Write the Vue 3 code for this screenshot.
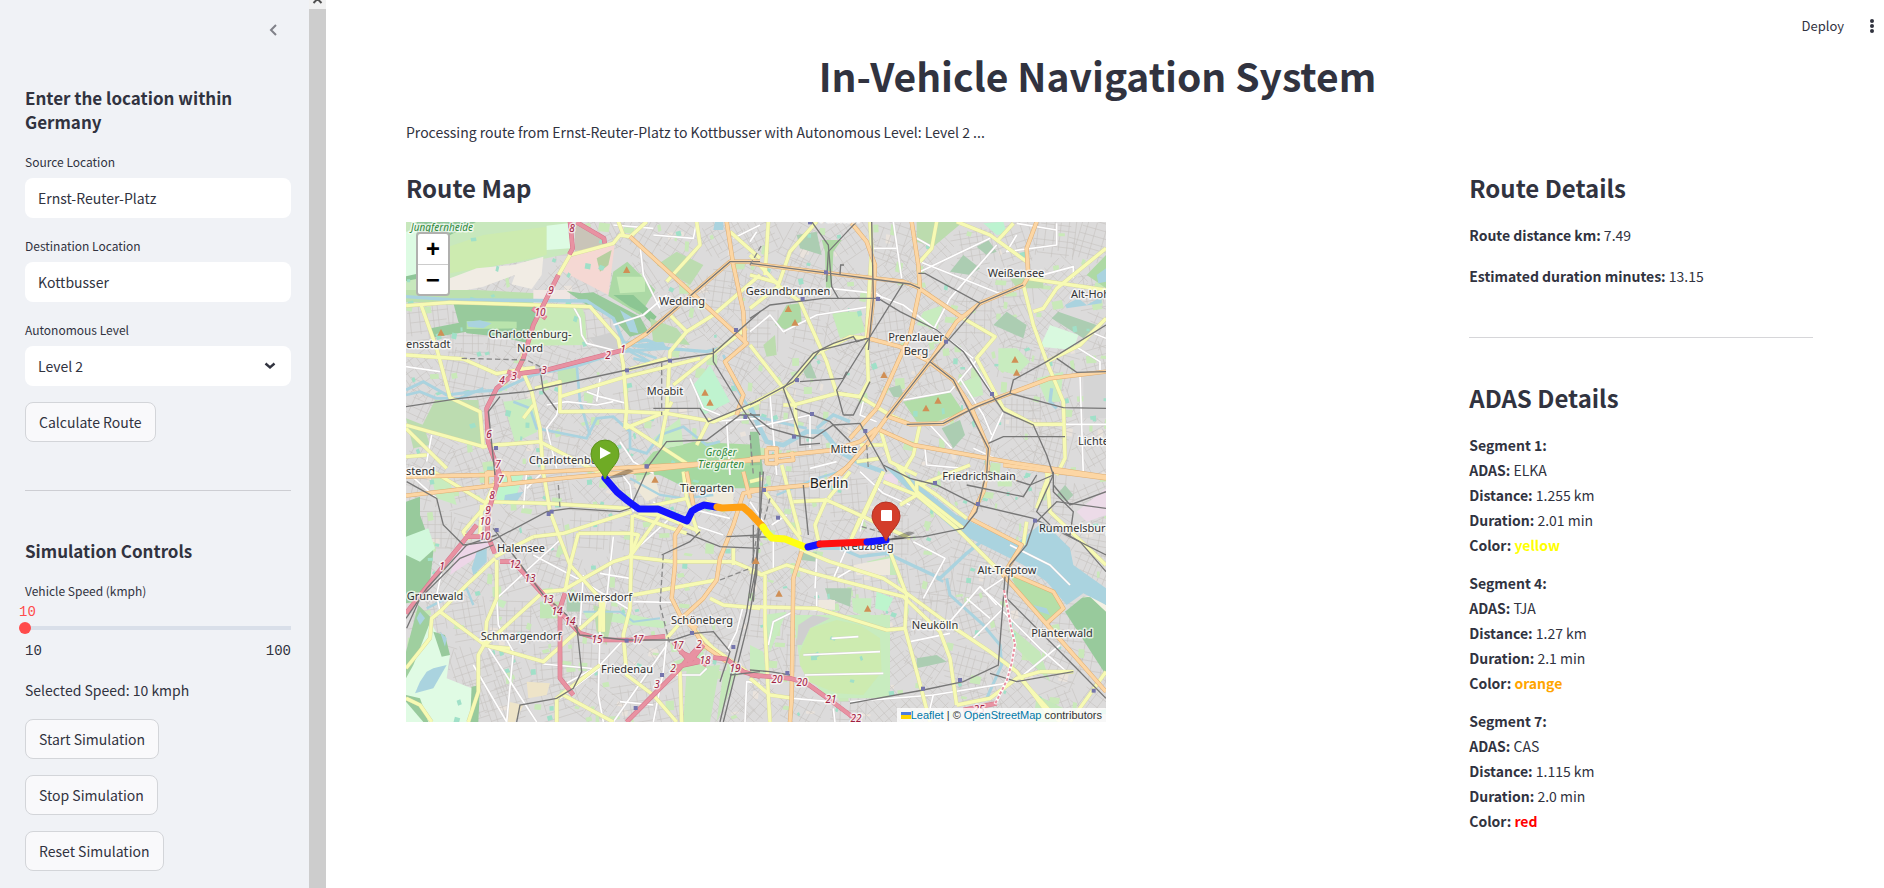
<script setup>
import { ref } from 'vue'

const source = ref('Ernst-Reuter-Platz')
const destination = ref('Kottbusser')
const level = ref('Level 2')
const speed = ref(10)

const segments = [
  { id: 1, adas: 'ELKA', distance: '1.255 km', duration: '2.01 min', color: 'yellow' },
  { id: 4, adas: 'TJA', distance: '1.27 km', duration: '2.1 min', color: 'orange' },
  { id: 7, adas: 'CAS', distance: '1.115 km', duration: '2.0 min', color: 'red' },
]

// Small deterministic generator, so that the side streets are the same on each load.
let seed = 20
function rand() {
  seed = (seed * 16807) % 2147483647
  return seed / 2147483647
}

function sideStreets() {
  let d = ''
  for (let cy = 20; cy < 500; cy += 42) {
    for (let cx = 20; cx < 700; cx += 42) {
      const base = rand() * 1.5
      const x0 = cx + rand() * 14 - 7
      const y0 = cy + rand() * 14 - 7
      for (let k = 0; k < 2; k++) {
        const a = base + (k * Math.PI) / 2
        const ux = Math.cos(a)
        const uy = Math.sin(a)
        for (let o = -20; o <= 20; o += 5 + rand() * 6) {
          const len = 12 + rand() * 12
          const mx = x0 - uy * o
          const my = y0 + ux * o
          d += `M${(mx - ux * len).toFixed(1)} ${(my - uy * len).toFixed(1)}L${(mx + ux * len).toFixed(1)} ${(my + uy * len).toFixed(1)}`
        }
      }
    }
  }
  return d
}

function patches(count, max) {
  let d = ''
  for (let i = 0; i < count; i++) {
    const x = rand() * 700
    const y = rand() * 500
    const w = 2 + rand() * max
    const h = 2 + rand() * max
    const s = rand() * 4 - 2
    d += `M${x.toFixed(1)} ${y.toFixed(1)}l${w.toFixed(1)} ${s.toFixed(1)}l${(-s).toFixed(1)} ${h.toFixed(1)}l${(-w).toFixed(1)} ${(-s).toFixed(1)}z`
  }
  return d
}

const streets = sideStreets()
const lawns = patches(330, 9)
const pitches = patches(170, 4)
const plots = patches(90, 7)

// The map is kept as four sheets; shapes use each sheet's own units, three to a pixel.
const sheets = [
  {
    at: 'translate(-6 -7) scale(0.33333)',
    areas: [
      ['#c8e8bd', '0,0 505,0 520,112 440,130 300,150 150,190 18,240'],
      ['#ddfbe3', '18,50 50,50 50,190 18,190'],
      ['#8fc698', '18,184 52,176 50,20 230,20 150,60 60,100 60,190 18,198'],
      ['#cdebb0', '145,95 250,60 440,35 440,120 330,145 150,175'],
      ['#ddfbe3', '440,32 510,24 510,100 440,105'],
      ['#f1ece4', '150,190 230,160 340,150 430,125 425,180 395,222 335,208 345,180 250,215 150,235'],
      ['#c9c4b8', '525,25 612,72 612,95 525,108'],
      ['#f5d8d3', '510,120 645,82 625,240 490,170'],
      ['#b7cfa0', '590,130 635,105 625,150 600,170'],
      ['#bce0ae', '18,225 230,225 410,235 400,265 18,262'],
      ['#98ca9c', '160,264 420,270 385,385 300,365 200,355 175,320'],
      ['#b9e4ac', '200,318 350,320 350,340 200,342'],
      ['#98ca9c', '92,340 185,322 200,350 95,368'],
      ['#c8eab8', '440,275 545,275 555,300 560,390 375,392 400,340'],
      ['#f0e6e2', '400,225 510,225 510,255 400,262'],
      ['#98ca9c', '500,228 545,235 580,232 720,305 745,350 690,365 640,310 560,270'],
      ['#acd9a5', '640,170 682,140 766,225 720,300 625,243'],
      ['#8cc693', '640,240 700,240 770,305 755,325 720,290 690,275'],
      ['#c5eab6', '650,185 735,185 735,230 660,235'],
      ['#bcdcb0', '105,555 235,555 245,690 60,645'],
      ['#c8ecbf', '310,560 400,550 412,650 345,682'],
      ['#c2e4b6', '472,460 530,460 530,500 475,505'],
      ['#bff3cf', '880,510 930,450 990,560 910,600'],
      ['#bcdcb0', '770,150 830,110 910,150 870,210'],
      ['#abdba2', '760,710 880,680 1080,690 1080,780 700,780'],
      ['#c8ecbf', '760,670 840,610 850,690 790,700'],
      ['#cfcfcf', '570,370 640,350 660,400 600,410'],
      ['#bcdcb0', '18,610 70,630 90,690 40,700'],
      ['#b9dcae', '750,310 830,340 870,390 760,380'],
    ],
    lakes: ['200,320 240,316 275,325 250,340 205,335', '945,20 970,20 970,45 940,45', '660,285 700,310 715,355 690,350', '670,390 790,380 800,400 720,400'],
    rivers: [
      ['10', '18,245 150,254 560,258 640,310 672,385 740,375 800,400 920,410 960,400'],
      ['9', '18,525 70,500 140,540 220,530 300,525 400,480 540,450 660,410 800,400'],
      ['8', '18,540 60,530 110,550 180,550 250,520'],
      ['8', '340,560 390,580 410,640 560,670 590,610 640,605 690,650 690,700 740,715 780,660 850,635 920,690 960,680'],
      ['8', '530,450 540,560 570,660'],
      ['8', '690,410 750,440 M700,430 740,440 M680,400 770,430'],
      ['8', '970,420 1010,520 1060,600'],
    ],
    white: [
      '18,455 120,470', '95,660 80,740', '440,570 500,560 590,570 640,560', '520,275 540,310 545,360 560,385 640,405',
      '560,530 600,545 680,565', '660,680 700,740 760,775', '600,490 590,560', '720,90 730,180 780,280', '890,20 880,70 760,60',
      '640,330 730,300 800,240', '920,620 1080,610', '480,550 470,600 440,640 470,760', '980,620 990,780', '870,490 910,580 960,600', '1000,70 1080,30', '760,40 640,30',
    ],
    yellow: [
      '18,272 150,262 570,275 655,372 670,450 680,580 675,640', '64,272 110,400 150,548 240,590 250,700', '18,420 190,432 290,476 370,462 405,458',
      '375,400 360,450 395,530 420,640 430,780', '405,520 480,500 480,590 640,588 800,595 940,620 1080,560', '290,690 420,680 600,775', '18,630 250,695 300,688',
      '18,640 140,760', '480,545 660,490 700,480 900,430', '665,470 800,430', '510,120 640,85 660,60 690,65 740,20', '510,120 470,190', '675,640 800,590 815,560',
      '890,20 900,90 800,200', '860,350 940,300 1080,180', '810,300 860,350 810,410 800,590 780,690', '820,510 920,430 1040,340', '990,50 1080,130', '675,625 860,745',
      '18,725 80,720', '655,20 670,60', '890,690 930,610', '370,610 400,570',
    ],
    orange: ['690,65 860,220 1040,385 975,440 1030,540 1010,600', '980,20 1000,150 1030,290 1035,385', '670,400 740,355 990,140 1080,140', '18,785 260,780 860,748 1080,735'],
    motorway: ['510,20 518,100 508,118', '530,22 612,70 614,85', '475,180 440,250 400,330 370,430 345,480', '670,405 440,465 340,478 290,520 260,580 264,680 300,780', '398,280 438,310', '322,470 362,485'],
    rail: ['18,575 180,550 380,530 680,465 810,435 940,415 1080,290', '740,355 990,140 1080,140', '940,400 940,440 1020,570 1080,660', '300,545 265,590 285,780', '740,760 800,680 920,675 1020,600 1080,600', '760,580 900,580 925,620 1080,555', '420,460 430,530 470,585'],
    dashed: ['185,430 380,435 420,455', '785,440 785,600'],
    peaks: ['680,165', '123,353', '915,533', '930,563'],
    stations: ['1008,345', '810,437', '681,466', '288,699', '1036,606', '740,754'],
  },
  {
    at: 'translate(344 -7) scale(0.33333)',
    areas: [
      ['#bcdcae', '500,20 640,20 550,95 500,80'],
      ['#accdb2', '140,60 200,50 215,120 150,100'],
      ['#aed9a4', '215,75 275,75 250,110 245,220 228,220 225,110'],
      ['#accdb2', '600,170 640,120 690,160 660,180'],
      ['#accdb2', '680,95 715,75 740,110 710,120'],
      ['#bcf3d0', '700,25 760,20 770,55 740,60'],
      ['#aed9a4', '75,330 110,270 150,265 155,320 110,345'],
      ['#c5ebb8', '245,290 330,290 345,350 270,370'],
      ['#accdb2', '730,330 770,290 830,330 820,370'],
      ['#accdb2', '905,310 925,290 1040,330 1000,370'],
      ['#d9f9df', '870,395 900,330 985,360 970,405'],
      ['#aed9a4', '1010,180 1068,120 1068,220 1040,200'],
      ['#c8ecbf', '745,400 800,400 840,440 800,480 745,465'],
      ['#b2dda8', '460,560 600,530 640,590 560,620 500,620'],
      ['#accdb2', '575,640 630,615 645,660 610,700'],
      ['#c8ecbf', '520,290 580,270 560,340 500,330'],
      ['#accdb2', '415,520 450,510 465,550 430,545'],
      ['#bcdcae', '780,190 800,190 880,180 880,220 800,220'],
      ['#d5d5d5', '1000,480 1068,470 1068,610 1000,610'],
      ['#accdb2', '160,470 180,440 200,490 170,490'],
      ['#98ca9c', '0,650 25,650 40,780 0,780'],
      ['#bcdcae', '40,390 75,360 80,420 50,425'],
      ['#c8ecbf', '640,500 690,480 700,540 660,550'],
      ['#c8ecbf', '860,490 940,470 930,560 890,560'],
    ],
    lakes: ['945,270 985,250 1010,270 1055,245 1055,265 950,280', '1040,180 1068,160 1068,200 1045,205'],
    rivers: [['14', '0,570 20,620 50,680 100,690 170,650 220,650 270,710 330,745 400,770'], ['10', '200,640 250,600 300,620'], ['8', '0,600 80,620 170,640'], ['10', '905,520 900,560 920,580']],
    white: [
      '430,20 455,190', '370,100 440,100', '0,350 60,300 100,350 200,300 360,275', '0,80 20,50', '550,345 600,250 740,90', '510,140 760,240', '500,70 545,95', '510,170 720,70', '380,240 460,270 560,345 670,430',
      '240,220 380,235 400,250', '460,555 600,530 680,435', '630,490 700,600 725,660', '660,430 760,590', '540,630 605,700', '990,480 1000,780', '720,680 760,590', '800,60 770,110 920,90 920,25', '800,25 920,45',
      '60,540 80,780', '0,640 180,600', '340,560 330,600 380,620', '525,700 530,750 640,760', '940,628 1068,628', '1020,350 1068,370', '840,190 970,155 970,190', '970,390 1050,440 1050,465', '180,600 180,700', '670,700 780,750', '180,760 260,740',
    ],
    yellow: [
      '55,20 45,180', '0,120 85,210', '85,210 120,110 200,20', '0,280 90,210', '0,180 90,205', '90,215 150,260 230,440 260,535', '0,390 100,520 135,570', '0,570 130,500 190,420 300,365 355,370',
      '360,20 365,100 350,360 355,500 330,545 260,535 130,570 100,570', '510,140 545,100 560,20', '620,20 720,60 830,140', '740,80 790,25', '640,310 735,365 680,430 760,580 850,628 940,628',
      '830,190 1068,225', '850,290 880,280 920,220 1068,100', '820,210 850,330 890,440 940,560 945,730 920,780', '890,440 990,390 1068,310', '260,535 330,545 420,600 480,628', '510,628 490,720 460,770', '390,640 420,740 500,780', '320,740 390,730', '135,570 140,660', '330,690 400,690',
    ],
    orange: [
      '0,145 240,175 460,200 500,215 640,310', '305,25 350,80 375,150 370,250 355,370', '485,20 505,150 510,220 480,360 390,560 380,580', '860,20 830,100 835,185 820,210 690,265 620,320 540,440 415,600 350,690 270,780',
      '355,370 450,395 530,435 610,495 665,580 715,700 710,780', '300,670 380,580', '415,605 480,628 580,625 660,580 900,490 1068,470', '390,645 490,690 800,745 1068,785', '0,730 60,725 250,705 330,680 380,640', '50,700 80,700 80,745 50,745 50,700', '80,740 130,735 125,710',
    ],
    motorway: [],
    rail: [
      '0,310 60,270 220,250 385,250 450,290 560,345 640,410 680,470 760,590 850,630 890,720 910,780', '185,20 235,90 245,215 265,250', '320,20 235,110 230,200', '270,178 272,150 282,150', '0,145 240,175 480,207 510,220', '365,20 370,250 355,405',
      '505,175 525,175 690,265 820,210', '460,205 260,525 280,600', '355,370 210,405 130,500 0,570', '410,608 540,440 690,265', '540,440 610,495 715,700 710,780', '0,595 60,640 130,660 190,670 250,630 330,625 410,770', '470,628 580,625 680,575 780,535', '780,535 790,495 890,440 1068,330', '780,535 940,578 1068,580', '715,685 760,665 945,665', '290,470 280,490 150,500', '350,370 320,380 310,365 250,385 190,415 100,520 150,660 150,690 210,685', '920,430 980,472 1068,470', '280,600 310,600 360,500', '135,580 240,620 300,680',
    ],
    dashed: ['0,150 35,90', '0,660 10,780', '350,690 355,760'],
    peaks: ['115,282', '135,323', '402,480', '795,434', '800,473', '564,557', '528,580'],
    stations: ['180,22', '228,172', '384,252', '158,252', '141,495', '588,380', '186,597', '132,665', '346,648', '726,537'],
  },
  {
    at: 'translate(-6 243) scale(0.33333)',
    areas: [
      ['#98ca9c', '18,110 60,95 60,150 100,260 90,350 40,410 18,415'],
      ['#d2f8dc', '18,215 85,190 105,250 60,290 18,270'],
      ['#bdf5cd', '290,30 370,30 340,120 290,110'],
      ['#e0fbe4', '18,620 90,470 150,570 140,640 215,670 215,771 18,771'],
      ['#9fcf9f', '55,420 95,460 60,550 40,600 18,640 18,560'],
      ['#98ca9c', '100,500 135,510 150,570 125,575'],
      ['#98ca9c', '18,690 60,700 85,771 70,771 18,710'],
      ['#98ca9c', '215,665 240,660 235,771 210,771'],
      ['#c8ecbf', '90,20 150,50 170,120 110,100'],
      ['#edd6e8', '190,240 290,220 240,270 150,330 170,260'],
      ['#a5d8a0', '680,20 1080,0 1080,70 860,70 780,30'],
      ['#eee8d8', '700,60 760,20 780,90 740,110'],
      ['#c2e6b6', '420,410 480,410 480,460 420,460'],
      ['#accdb2', '500,390 545,390 545,440 500,440'],
      ['#c9edc0', '550,440 700,450 800,470 790,490 700,480 560,460'],
      ['#eee4c8', '380,650 450,655 440,690 385,700'],
      ['#eee4c8', '325,710 370,720 345,771 320,771'],
      ['#c5e8ba', '860,610 960,600 930,771 850,771'],
      ['#c5e8ba', '970,620 1010,600 990,680 950,771'],
      ['#eee8d8', '920,80 1000,80 1000,120 920,120'],
      ['#c5e8ba', '820,590 910,560 920,610 840,620'],
      ['#bcdcae', '580,420 640,440 620,540 590,500'],
      ['#c8ecbf', '290,400 320,410 310,430 290,420'],
    ],
    lakes: ['60,650 80,620 100,610 140,600 100,670 45,685', '315,90 370,80 350,110 310,120', '230,260 260,250 260,290 220,330 215,310', '120,500 140,520 135,545', '60,440 75,460 60,480 50,460'],
    rivers: [['6', '550,440 660,440 700,470 780,460'], ['7', '80,430 200,370 220,420'], ['7', '690,40 780,90 850,100 940,90']],
    white: [
      '380,20 370,130', '20,20 110,100', '400,270 550,350 690,435', '480,225 290,400', '540,480 550,330', '600,325 690,340', '640,215 620,400 600,500 595,690 610,771', '120,440 110,390 125,320', '290,400 295,480 340,560 320,771', '260,540 410,771',
      '430,597 595,612 480,700', '700,410 815,412', '760,110 810,160 700,260', '865,130 990,160', '665,530 600,600', '800,540 640,771', '800,520 790,620 760,771', '815,630 900,630 920,610', '880,180 970,210', '660,20 690,60 700,140', '1080,655 1040,650 1035,771', '660,710 760,720', '220,600 320,771', '380,70 430,20', '1030,420 1010,500 980,560', '490,660 600,600',
    ],
    yellow: [
      '100,20 250,110 440,115 690,130', '430,20 450,140 510,300 600,400 610,500', '400,215 490,205 695,140', '285,275 400,215', '290,285 290,400 260,470 255,535 235,570 235,680 205,771', '285,280 210,350 120,440 255,540 430,590 530,500 610,430', '18,610 90,520 95,460 120,440', '255,540 430,380 490,375 640,290 690,275 820,290 1000,290 1080,325',
      '535,205 510,300 495,380', '535,205 690,205 715,210 690,275', '697,150 690,430 670,510 680,630 760,690 830,771', '270,545 330,550', '700,390 950,345', '700,150 860,205', '715,145 780,150 900,200', '850,20 860,100 720,130', '860,100 895,210', '610,500 610,410', '930,400 970,420 1080,430', '940,120 920,110 890,130',
      '880,490 940,550 1040,620', '835,480 800,520', '470,771 470,700 600,600', '490,690 640,771', '840,620 845,771', '300,20 250,130 190,200 200,220 240,210', '1000,250 1000,300', '18,700 60,720 95,771', '690,275 780,150', '600,430 600,500', '245,120 240,210',
    ],
    orange: ['18,92 250,65 480,40 700,20 1080,-20', '260,22 325,25 330,55', '260,20 260,60', '1080,75 1030,85 1000,180 960,280 950,345 910,400 850,455 890,490', '845,180 825,210 825,300 815,400 840,450 880,490 910,540 980,590', '860,20 880,120', '1030,20 1050,100'],
    motorway: ['18,445 100,340 230,180', '290,20 290,60 265,140 262,210 285,265', '300,290 340,290 440,400 470,430 540,505 610,525 690,525 795,514', '495,385 480,430 480,640 520,690', '820,530 870,590 910,540', '840,560 920,600', '900,540 830,620 760,690 680,771', '830,605 900,590', '940,578 980,582 1030,620 1080,635', '195,215 250,215'],
    rail: ['20,50 110,100 130,180 190,240 270,230 440,140 510,130 660,140 690,130 740,20', '18,460 80,370 200,240 290,210', '20,490 60,400 180,280 280,240', '280,190 340,270 430,390 500,450 540,510 680,525 820,525 880,505 940,500 990,560 960,650', '1060,180 1060,300 1040,440 1000,600 960,771', '1075,190 1070,330 1045,470 970,771', '860,205 960,245 1080,250', '980,215 1080,210', '990,630 1080,620', '350,771 360,720 470,700 520,670 545,620 530,480', '785,270 870,230 900,200'],
    dashed: ['790,270 780,420 810,540', '960,345 1050,310', '475,60 480,130'],
    peaks: ['765,44', '1068,287'],
    stations: ['455,140', '446,147', '290,195', '680,527', '876,504', '1000,546', '786,630', '707,729', '740,4'],
  },
  {
    at: 'translate(344 243) scale(0.33333)',
    areas: [
      ['#accdb2', '225,370 305,370 300,425 235,400'],
      ['#bdf5cd', '380,380 430,400 410,440 375,430'],
      ['#c8ecbf', '305,400 365,400 360,460 310,440'],
      ['#eee8de', '205,405 255,405 255,435 205,430'],
      ['#c8ecbf', '130,450 420,450 420,700 230,700 150,600'],
      ['#cdebb0', '150,560 180,490 260,465 330,480 390,520 395,620 340,690 260,685 175,650 150,600'],
      ['#cfcfcf', '140,540 145,480 190,450 240,460 180,490 155,540'],
      ['#accdb2', '500,580 560,570 590,590 500,610'],
      ['#98ca9c', '945,440 1000,395 1068,400 1068,630'],
      ['#f4f1e4', '980,400 1040,390 1068,420 1068,440 1020,395'],
      ['#b5dfa8', '780,330 840,345 920,390 940,430 880,475 800,370'],
      ['#ecdbe8', '980,140 1068,70 1068,150 1010,170'],
      ['#ecdbe8', '400,30 450,20 440,70 410,60'],
      ['#c5e8ba', '775,480 870,560 900,650 850,600 790,540'],
      ['#c5e8ba', '860,690 940,730 930,771 850,771'],
      ['#accdb2', '150,265 200,262 200,290 155,285'],
      ['#c8ecbf', '40,450 110,440 60,560'],
      ['#c8ecbf', '0,540 40,560 50,640 0,640'],
      ['#c5e8ba', '350,290 430,270 440,330 390,330'],
      ['#eee8de', '310,300 420,280 420,330 320,330'],
      ['#accdb2', '920,90 945,60 970,90 950,110'],
    ],
    lakes: ['400,0 470,30 620,150 800,235 880,170 960,250 970,300 1068,370 1068,420 1000,385 950,420 890,350 820,300 700,240 620,200 480,80', '850,420 890,430 900,450 870,440'],
    rivers: [['10', '210,250 270,250 330,275 410,265 570,340 650,265 700,225'], ['9', '590,340 600,390 700,480 750,540 755,600 710,700'], ['7', '270,20 200,40 80,90'], ['7', '560,340 580,350']],
    white: [
      '330,20 400,85 480,120', '490,230 585,280 520,400', '130,440 70,470 55,540', '200,380 200,435', '600,470 690,365 760,430 670,520', '650,400 720,460', '700,380 760,340', '760,440 870,550 950,620', '820,630 930,540', '480,530 600,505', '300,710 550,690 800,650', '780,240 900,300 960,360', '310,310 260,340', '160,570 390,560', '165,630 400,625', '250,730 255,771',
      '65,180 110,150', '70,220 70,310', '0,110 40,170', '150,430 240,440', '550,690 540,730', '200,280 195,370', '290,250 250,340', '690,365 740,420', '340,160 330,200', '60,690 130,700 240,710', '245,520 325,515',
    ],
    yellow: [
      '45,80 150,220 155,260', '95,0 150,210', '130,110 230,105 340,155 480,220', '235,100 300,20', '230,100 195,180 210,250', '155,255 240,290 400,340 470,385 600,480 720,560 800,620 890,740', '30,330 110,300 190,325 460,395 570,500 600,580 620,720', '0,425 200,430 410,495 465,490', '45,330 45,480 55,690', '420,260 470,390 465,490 500,620 540,771',
      '330,160 300,230 400,20', '400,50 500,90 620,190 760,330', '500,90 500,50 560,90 650,160', '830,170 820,240', '0,640 60,690 130,700', '620,720 720,700 800,640 870,620', '815,645 930,771', '870,620 970,620', '900,20 860,130', '660,0 510,60', '0,50 40,40', '890,20 900,140 1068,300', '640,190 500,80 440,0', '960,771 1068,620', '0,320 40,330', '340,155 400,20', '450,120 500,90', '55,690 60,771',
    ],
    orange: ['0,75 50,72 175,60 230,50 300,0', '155,260 130,340 125,700 120,771', '715,0 700,80 660,160 815,240 760,330 1068,680', '760,0 1068,40', '770,320 910,380 940,430 890,475'],
    motorway: ['0,630 120,640 170,655 240,705 300,750 330,771', '640,735 740,715'],
    rail: ['30,20 30,130 10,410', '40,20 20,300 0,400', '400,0 480,40 560,60 680,120 850,160 1068,270', '410,223 520,215 640,190 680,140 710,20', '855,165 830,240 780,300 770,400 960,590 1068,700', '765,335 745,600 640,650 520,675 300,715', '0,615 60,620 120,630', '910,30 860,140 900,180 990,230 1068,320', '910,20 910,80 970,140 960,210 900,190', '910,60 960,120 1068,80', '715,20 840,60 910,30', '160,60 175,210', '720,625 800,650 970,620', '650,60 820,95 860,30', '860,170 920,110 1068,130', '0,216 60,216'],
    dashed: ['35,130 5,300', '60,100 20,250', '335,185 440,215'],
    peaks: ['87,386', '353,431', '17,288'],
    stations: ['42,75', '84,158', '555,54', '684,117', '855,167', '519,671', '630,645', '1031,677', '112,624'],
  },
]

const lineKinds = ['white', 'yellow', 'orange', 'motorway']

function toPath(line) {
  return 'M' + line.replace(/ M/g, 'M')
}

const places = [
  { t: 'Pankow', x: 434, y: 0 },
  { t: 'Wedding', x: 276, y: 83 },
  { t: 'Charlottenburg-', x: 124, y: 116 },
  { t: 'Nord', x: 124, y: 130 },
  { t: 'ensstadt', x: 0, y: 126, start: true },
  { t: 'Moabit', x: 259, y: 173 },
  { t: 'Charlottenburg', x: 123, y: 242, start: true },
  { t: 'stend', x: 0, y: 253, start: true },
  { t: 'Weißensee', x: 610, y: 55 },
  { t: 'Gesundbrunnen', x: 382, y: 73 },
  { t: 'Alt-Hohen', x: 665, y: 76, start: true },
  { t: 'Prenzlauer', x: 510, y: 119 },
  { t: 'Berg', x: 510, y: 133 },
  { t: 'Mitte', x: 438, y: 231 },
  { t: 'Lichtenberg', x: 672, y: 223, start: true },
  { t: 'Friedrichshain', x: 573, y: 258 },
  { t: 'Kreuzberg', x: 461, y: 328 },
  { t: 'Rummelsburg', x: 633, y: 310, start: true },
  { t: 'Alt-Treptow', x: 601, y: 352 },
  { t: 'Neukölln', x: 529, y: 407 },
  { t: 'Plänterwald', x: 656, y: 415 },
  { t: 'Tiergarten', x: 301, y: 270 },
  { t: 'Halensee', x: 115, y: 330 },
  { t: 'Grunewald', x: 29, y: 378 },
  { t: 'Wilmersdorf', x: 194, y: 379 },
  { t: 'Schmargendorf', x: 115, y: 418 },
  { t: 'Schöneberg', x: 296, y: 402 },
  { t: 'Friedenau', x: 221, y: 451 },
]

const exits = [
  ['8', 166, 10], ['9', 145, 72], ['10', 134, 94], ['2', 202, 137], ['1', 217, 131], ['3', 138, 152], ['3', 108, 158], ['4', 96, 162], ['6', 83, 216], ['7', 92, 246],
  ['7', 95, 261], ['8', 86, 277], ['9', 82, 292], ['10', 79, 303], ['10', 79, 318], ['1', 36, 348], ['12', 109, 346], ['13', 124, 360], ['13', 142, 381], ['14', 151, 393],
  ['14', 164, 403], ['15', 191, 421], ['17', 232, 421], ['17', 272, 427], ['2', 293, 426], ['2', 267, 450], ['18', 299, 442], ['19', 329, 450], ['3', 251, 466],
  ['20', 371, 461], ['20', 396, 464], ['21', 425, 481], ['22', 450, 500], ['25', 573, 491],
]

const route = [
  ['#1414ff', '199,256 211,270 222,279 233,287 252,287 281,299 286,289 291,286 298,283 310,285'],
  ['#ffa012', '311,285 316,286 337,285 344,291 357,305'],
  ['#ffff12', '357,305 361,311 366,316 379,317 399,325'],
  ['#1414ff', '402,325 414,322'],
  ['#ff1212', '414,322 460,320'],
  ['#1414ff', '461,320 480,318'],
]
</script>

<template>
  <div class="app">
    <aside class="sidebar">
      <div class="sidebar-body">
        <div class="sidebar-top">
          <button class="icon-button" type="button" aria-label="Collapse sidebar">
            <svg width="20" height="20" viewBox="0 0 20 20"><path d="M13 5 8 10l5 5" fill="none" stroke="#808189" stroke-width="2" /></svg>
          </button>
        </div>
        <h3>Enter the location within Germany</h3>
        <div class="field">
          <label for="source">Source Location</label>
          <input id="source" v-model="source" type="text" />
        </div>
        <div class="field">
          <label for="destination">Destination Location</label>
          <input id="destination" v-model="destination" type="text" />
        </div>
        <div class="field">
          <label for="level">Autonomous Level</label>
          <div class="select">
            <select id="level" v-model="level">
              <option>Level 0</option>
              <option>Level 1</option>
              <option>Level 2</option>
              <option>Level 3</option>
            </select>
            <svg class="chevron" width="12" height="8" viewBox="0 0 12 8"><path d="M1.500 1.500 6 5.500l4.500-4" fill="none" stroke="#31333f" stroke-width="2.400" /></svg>
          </div>
        </div>
        <button class="button" type="button">Calculate Route</button>
        <hr />
        <h3>Simulation Controls</h3>
        <div class="slider">
          <label for="speed">Vehicle Speed (kmph)</label>
          <output for="speed" :style="{ marginLeft: `calc(${(speed - 10) / 0.9}% - 6px)` }">{{ speed }}</output>
          <input id="speed" v-model="speed" type="range" min="10" max="100" />
          <div class="ticks"><span>10</span><span>100</span></div>
        </div>
        <p class="selected">Selected Speed: {{ speed }} kmph</p>
        <div class="actions">
          <button class="button" type="button">Start Simulation</button>
          <button class="button" type="button">Stop Simulation</button>
          <button class="button" type="button">Reset Simulation</button>
        </div>
      </div>
      <div class="scrollbar">
        <div class="scroll-arrow">
          <svg width="17" height="9" viewBox="0 0 17 9"><path d="M4.500 3 8.500-1l4 4" fill="none" stroke="#505050" stroke-width="2" /></svg>
        </div>
      </div>
    </aside>

    <main>
      <header>
        <button class="deploy" type="button">Deploy</button>
        <button class="icon-button" type="button" aria-label="Main menu">
          <svg width="20" height="20" viewBox="0 0 20 20" fill="#31333f"><circle cx="10" cy="5" r="2" /><circle cx="10" cy="10" r="2" /><circle cx="10" cy="15" r="2" /></svg>
        </button>
      </header>

      <div class="content">
        <h1>In-Vehicle Navigation System</h1>
        <p class="status">Processing route from {{ source }} to {{ destination }} with Autonomous Level: {{ level }} ...</p>

        <div class="columns">
          <section>
            <h2>Route Map</h2>
            <div class="map">
              <svg class="canvas" viewBox="0 0 700 500" role="img" aria-label="Route across Berlin">
                <rect width="700" height="500" fill="#dcdbdb" />
                <path class="plots" :d="plots" />
                <path class="streets" :d="streets" />
                <path class="lawns" :d="lawns" />
                <g v-for="s in sheets" :key="s.at" :transform="s.at">
                  <polygon v-for="a in s.areas" :key="a[1]" :points="a[1]" :fill="a[0]" />
                </g>
                <path class="pitches" :d="pitches" />
                <g v-for="s in sheets" :key="s.at" :transform="s.at" class="water">
                  <polygon v-for="l in s.lakes" :key="l" :points="l" />
                  <path v-for="r in s.rivers" :key="r[1]" :d="toPath(r[1])" :stroke-width="r[0]" />
                </g>
                <template v-for="kind in lineKinds" :key="kind">
                  <g v-for="s in sheets" :key="s.at" :transform="s.at" :class="['road', kind, 'casing']">
                    <path v-for="l in s[kind]" :key="l" :d="toPath(l)" />
                  </g>
                  <g v-for="s in sheets" :key="s.at + 'f'" :transform="s.at" :class="['road', kind]">
                    <path v-for="l in s[kind]" :key="l" :d="toPath(l)" />
                  </g>
                </template>
                <g v-for="s in sheets" :key="s.at" :transform="s.at">
                  <path v-for="l in s.rail" :key="l" class="rail" :d="toPath(l)" />
                  <path v-for="l in s.dashed" :key="l" class="dashed" :d="toPath(l)" />
                  <g v-for="p in s.peaks" :key="p" :transform="`translate(${p})`"><path d="M0-11 11 9h-22z" fill="#d08f55" /></g>
                  <g v-for="p in s.stations" :key="p" :transform="`translate(${p})`"><path d="M-6-6H6V6H-6z" fill="#7575ad" /></g>
                </g>
                <path d="M598 368l4 20 3 18 4 16-3 18-5 18-12 24" fill="none" stroke="#fff" stroke-width="3" />
                <path d="M598 368l4 20 3 18 4 16-3 18-5 18-12 24" fill="none" stroke="#e892a2" stroke-width="2" stroke-dasharray="3 2" />
                <g class="exits"><text v-for="(e, i) in exits" :key="i" :x="e[1]" :y="e[2]">{{ e[0] }}</text></g>
                <g class="places"><text v-for="p in places" :key="p.t" :x="p.x" :y="p.y" :class="{ start: p.start }">{{ p.t }}</text></g>
                <text class="city" x="423" y="266">Berlin</text>
                <g class="woods">
                  <text x="315" y="234">Großer</text>
                  <text x="315" y="246">Tiergarten</text>
                  <text x="36" y="9">Jungfernheide</text>
                </g>
                <g class="route"><polyline v-for="r in route" :key="r[1]" :points="r[1]" :stroke="r[0]" /></g>
                <g transform="translate(199 257)">
                  <path d="M0 0 18-8q6-3 11 0l-12 6z" fill="#000" opacity="0.300" />
                  <path d="M0 0C-5-11-14-16-14-25a14 14 0 0 1 28 0C14-16 5-11 0 0z" fill="#6fab25" stroke="#5d921c" />
                  <path d="M-5-32 6-26-5-20z" fill="#fff" />
                </g>
                <g transform="translate(480 319)">
                  <path d="M0 0 18-8q6-3 11 0l-12 6z" fill="#000" opacity="0.300" />
                  <path d="M0 0C-5-11-14-16-14-25a14 14 0 0 1 28 0C14-16 5-11 0 0z" fill="#d33d2a" stroke="#b53222" />
                  <rect x="-5" y="-31" width="11" height="11" rx="1" fill="#fff" />
                </g>
              </svg>
              <div class="zoom">
                <button type="button" aria-label="Zoom in">+</button>
                <button type="button" aria-label="Zoom out">−</button>
              </div>
              <div class="credit">
                <svg width="10" height="7" viewBox="0 0 10 7"><path fill="#4c7be1" d="M0 0h10v4H0z" /><path fill="#ffd500" d="M0 3h10v4H0z" /></svg>
                <a href="#leaflet">Leaflet</a> | © <a href="#osm">OpenStreetMap</a> contributors
              </div>
            </div>
          </section>

          <section>
            <h2>Route Details</h2>
            <div class="summary">
              <p><strong>Route distance km:</strong> 7.49</p>
              <p><strong>Estimated duration minutes:</strong> 13.15</p>
            </div>
            <hr class="split" />
            <h2>ADAS Details</h2>
            <div class="segments">
              <div v-for="s in segments" :key="s.id">
                <p><strong>Segment {{ s.id }}:</strong></p>
                <p><strong>ADAS:</strong> {{ s.adas }}</p>
                <p><strong>Distance:</strong> {{ s.distance }}</p>
                <p><strong>Duration:</strong> {{ s.duration }}</p>
                <p><strong>Color:</strong> <b :class="s.color">{{ s.color }}</b></p>
              </div>
            </div>
          </section>
        </div>
      </div>
    </main>
  </div>
</template>

<style>
body {
  background: #fff;
}
</style>

<style scoped>
.app {
  display: flex;
  height: 100vh;
  overflow: hidden;
  color: #31333f;
  font: 14px/26px "Noto Sans CJK SC", "Noto Sans", sans-serif;
}
.app * {
  box-sizing: border-box;
}
h1,
h2,
h3,
p {
  margin: 0;
}
button,
input,
select {
  font: inherit;
  color: inherit;
}
button {
  cursor: pointer;
}
strong,
h2,
h3 {
  font-weight: 600;
}
hr {
  border: 0;
  border-top: 1px solid #cdced3;
  margin: 48px 0;
}
.sidebar {
  display: flex;
  flex: none;
  width: 326px;
  background: #f0f2f6;
}
.sidebar-body {
  flex: 1;
  padding: 0 18px 0 25px;
}
.sidebar-top {
  display: flex;
  justify-content: flex-end;
  height: 86px;
  padding-top: 20px;
  padding-right: 8px;
}
.icon-button {
  display: block;
  width: 20px;
  height: 20px;
  padding: 0;
  border: 0;
  background: none;
}
h3 {
  font-size: 17px;
  line-height: 24px;
}
.field {
  margin-top: 17px;
}
.field label,
.slider label {
  display: block;
  font-size: 12px;
  line-height: 22px;
}
.field label {
  height: 27px;
}
.field input,
select {
  display: block;
  width: 100%;
  height: 40px;
  padding: 0 13px;
  border: 0;
  border-radius: 8px;
  background: #fff;
  line-height: 26px;
  appearance: none;
}
.select {
  position: relative;
}
.chevron {
  position: absolute;
  right: 15px;
  top: 16px;
  pointer-events: none;
}
.button {
  display: block;
  height: 40px;
  padding: 0 13px;
  border: 1px solid #d3d5d9;
  border-radius: 8px;
  background: #f9f9fb;
}
.field + .button {
  margin-top: 16px;
}
.slider {
  margin-top: 17px;
}
.slider output {
  display: block;
  color: #ff4b4b;
  font: 14px/20px "Liberation Mono", monospace;
}
.slider input {
  display: block;
  width: calc(100% + 12px);
  height: 12px;
  margin: 0 -6px;
  background: linear-gradient(#d9dfe9, #d9dfe9) center / calc(100% - 12px) 4px no-repeat;
  appearance: none;
}
.slider input::-webkit-slider-thumb {
  width: 12px;
  height: 12px;
  border-radius: 50%;
  background: #ff4b4b;
  appearance: none;
}
.ticks {
  display: flex;
  justify-content: space-between;
  margin-top: 7px;
  font: 14px/20px "Liberation Mono", monospace;
}
.selected {
  margin-top: 16px;
}
.actions {
  display: grid;
  justify-items: start;
  gap: 16px;
  margin-top: 16px;
}
.scrollbar {
  width: 17px;
  background: #cdcdcd;
}
.scroll-arrow {
  height: 9px;
  background: #f1f1f1;
}
.scroll-arrow svg {
  display: block;
}
main {
  flex: 1;
  min-width: 0;
}
header {
  display: flex;
  align-items: center;
  justify-content: flex-end;
  gap: 18px;
  height: 52px;
  padding-right: 2px;
}
.deploy {
  padding: 0;
  border: 0;
  background: none;
  font-size: 13px;
}
.content {
  padding: 0 71px 0 80px;
}
h1 {
  padding-right: 24px;
  font-size: 39px;
  line-height: 46px;
  font-weight: 700;
  text-align: center;
}
.status {
  margin-top: 21px;
}
.columns {
  display: grid;
  grid-template-columns: 3fr 1fr;
  gap: 32px;
  margin-top: 25px;
}
h2 {
  font-size: 24px;
  line-height: 36px;
}
.map {
  position: relative;
  max-width: 700px;
  margin-top: 16px;
}
.canvas {
  display: block;
  width: 100%;
}
.zoom {
  position: absolute;
  top: 10px;
  left: 10px;
  border: 2px solid #b0b0ae;
  border-radius: 4px;
  overflow: hidden;
}
.zoom button {
  display: block;
  width: 30px;
  height: 30px;
  padding: 0;
  border: 0;
  background: #fff;
  color: #000;
  font: 700 24px/34px "Liberation Mono", monospace;
}
.zoom button + button {
  border-top: 1px solid #ccc;
}
.credit {
  position: absolute;
  right: 0;
  bottom: 0;
  padding: 0 4px;
  background: rgba(255, 255, 255, 0.8);
  color: #333;
  font: 11px/14px "Liberation Sans", Arial, sans-serif;
}
.credit a {
  color: #0078a8;
  text-decoration: none;
}
.summary {
  display: grid;
  gap: 15px;
  margin-top: 16px;
}
.split {
  margin: 48px 0 42px;
  border-color: #d6d6d9;
}
.segments {
  display: grid;
  gap: 13px;
  margin-top: 17px;
  line-height: 25px;
}
b.yellow {
  color: #ff0;
}
b.orange {
  color: orange;
}
b.red {
  color: red;
}
.streets {
  fill: none;
  stroke: #c6c2c0;
  stroke-width: 0.6;
}
.lawns {
  fill: #c9e9b9;
}
.pitches {
  fill: #a0e0c8;
}
.plots {
  fill: #eae3dc;
}
.water polygon {
  fill: #aad3df;
}
.water path {
  fill: none;
  stroke: #aad3df;
}
.road path {
  fill: none;
  stroke-linejoin: round;
}
.white path {
  stroke: #fff;
  stroke-width: 5;
}
.white.casing path {
  stroke: #d0cccc;
  stroke-width: 7;
}
.yellow path {
  stroke: #f7fab4;
  stroke-width: 10;
}
.yellow.casing path {
  stroke: #d5d79c;
  stroke-width: 12;
}
.orange path {
  stroke: #fcd6a4;
  stroke-width: 10;
}
.orange.casing path {
  stroke: #e0ad70;
  stroke-width: 13;
}
.motorway path {
  stroke: #e892a2;
  stroke-width: 11;
}
.motorway.casing path {
  stroke: #d5748a;
  stroke-width: 14;
}
.rail {
  fill: none;
  stroke: #777;
  stroke-width: 4;
}
.dashed {
  fill: none;
  stroke: #8a8a8a;
  stroke-width: 4;
  stroke-dasharray: 16 9;
}
.canvas text {
  paint-order: stroke;
  stroke: rgba(255, 255, 255, 0.7);
  stroke-width: 3px;
  stroke-linejoin: round;
  text-anchor: middle;
  font-family: "Noto Sans", sans-serif;
}
.places text {
  fill: #333;
  font-size: 11px;
}
.canvas .places .start {
  text-anchor: start;
}
.canvas .city {
  fill: #222;
  font-size: 14px;
}
.exits text {
  fill: #a0203f;
  font-size: 10px;
  font-style: italic;
}
.woods text {
  fill: #2f8a3c;
  font-size: 10px;
  font-style: italic;
}
.route polyline {
  fill: none;
  stroke-width: 7;
  stroke-linecap: round;
  stroke-linejoin: round;
}
</style>
